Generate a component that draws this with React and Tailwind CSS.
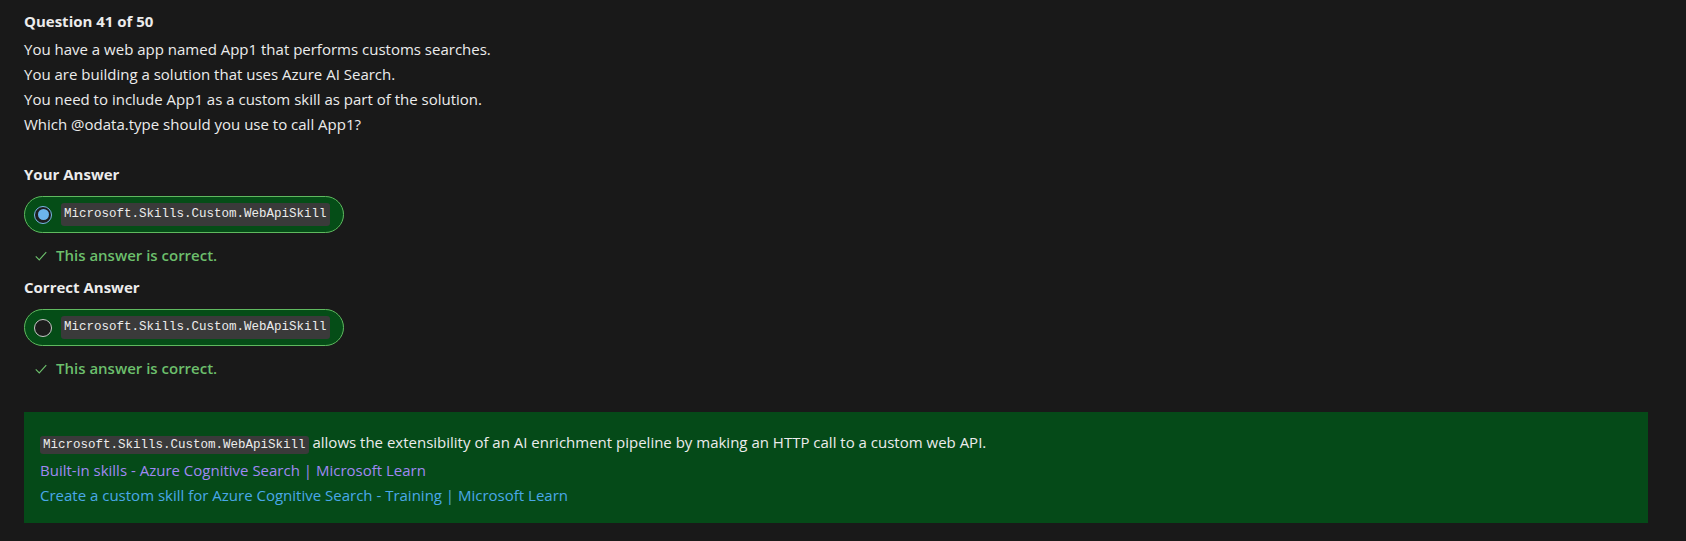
import React from "react";

const sans = { fontFamily: '"Open Sans", "Noto Sans", sans-serif' };

function Code() {
  return (
    <code
      className="rounded-[3px] bg-[#3a3a3a] px-[3px] py-[2px] text-[12.5px] text-[#ececec]"
      style={{ fontFamily: '"Liberation Mono", "DejaVu Sans Mono", monospace' }}
    >
      Microsoft.Skills.Custom.WebApiSkill
    </code>
  );
}

function Pill({ selected }) {
  return (
    <div className="flex h-[37px] w-[320px] items-center gap-[9px] rounded-full border border-[#5fb95f] bg-[#054d17] pl-[9px]">
      {selected ? (
        <span className="flex h-[18px] w-[18px] items-center justify-center rounded-full border border-[#7ab8e8] bg-[#1e1e1e]">
          <span className="h-[11px] w-[11px] rounded-full bg-[#6cb4ec]" />
        </span>
      ) : (
        <span className="h-[18px] w-[18px] rounded-full border border-[#c8c8c8] bg-[#1c1c1c]" />
      )}
      <Code />
    </div>
  );
}

function Correct() {
  return (
    <div className="mt-[10px] flex items-center gap-[8px] pl-[10px] text-[15px] leading-[25px] font-semibold text-[#6cbf6c]">
      <svg width="14" height="14" viewBox="0 0 16 16" fill="none" stroke="#6cbf6c" strokeWidth="1.3">
        <path d="M2 8.5l4 4 8-9" />
      </svg>
      <span>This answer is correct.</span>
    </div>
  );
}

export default function App() {
  return (
    <div className="min-h-[541px] w-full bg-[#191919] pl-[24px] pr-[38px] pt-[9px] text-[#ececec]" style={sans}>
      <div className="mb-[3px] text-[15px] font-bold leading-[25px]">Question 41 of 50</div>
      <div className="text-[15px] leading-[25px]">
        <div>You have a web app named App1 that performs customs searches.</div>
        <div>You are building a solution that uses Azure AI Search.</div>
        <div>You need to include App1 as a custom skill as part of the solution.</div>
        <div>Which @odata.type should you use to call App1?</div>
      </div>
      <div className="mt-[25px] text-[15px] font-bold leading-[25px]">Your Answer</div>
      <div className="mt-[9px]">
        <Pill selected />
      </div>
      <Correct />
      <div className="mt-[7px] text-[15px] font-bold leading-[25px]">Correct Answer</div>
      <div className="mt-[9px]">
        <Pill />
      </div>
      <Correct />
      <div className="mt-[31px] bg-[#054a18] pb-[15px] pl-[16px] pt-[18px] text-[15px] leading-[25px]">
        <div>
          <Code /> allows the extensibility of an AI enrichment pipeline by making an HTTP call to a custom web API.
        </div>
        <div className="text-[#a088f2]">Built-in skills - Azure Cognitive Search | Microsoft Learn</div>
        <div className="text-[#4aa8e8]">Create a custom skill for Azure Cognitive Search - Training | Microsoft Learn</div>
      </div>
    </div>
  );
}
